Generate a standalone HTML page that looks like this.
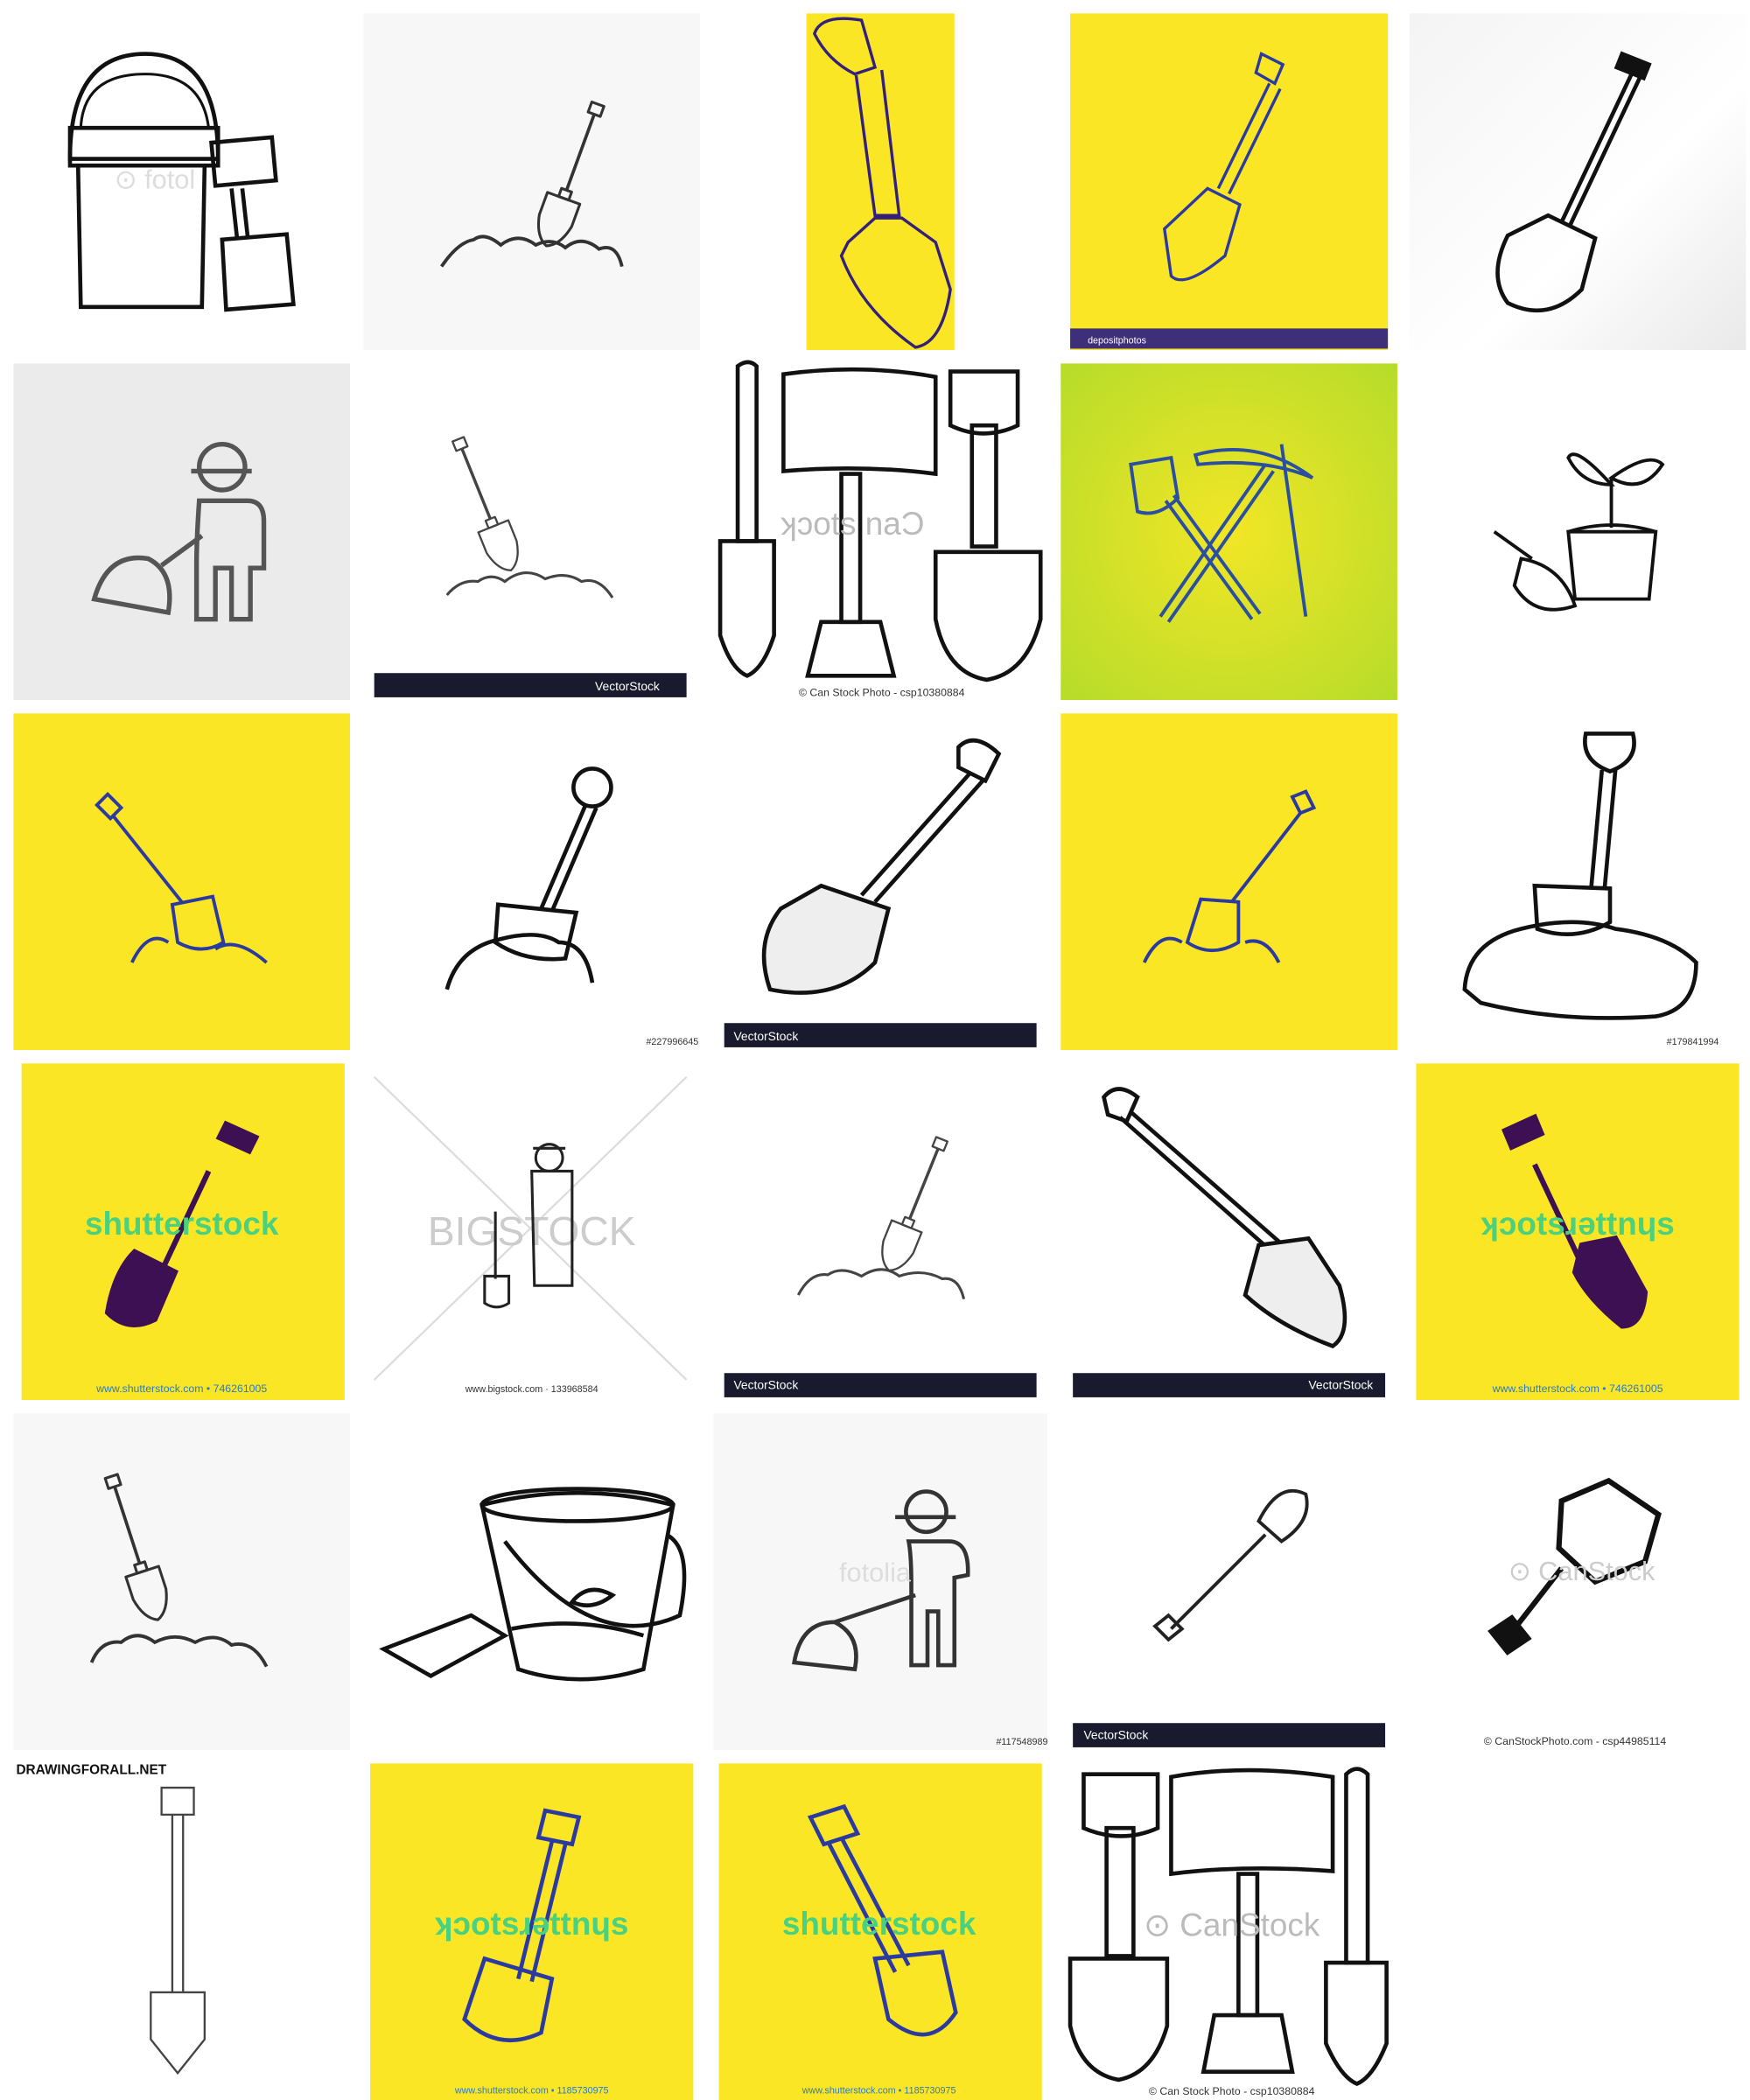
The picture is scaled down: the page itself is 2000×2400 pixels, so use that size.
<!DOCTYPE html>
<html><head><meta charset="utf-8"><style>
html,body{margin:0;padding:0;background:#fff;width:2000px;height:2400px;overflow:hidden}
svg{display:block}
text{font-family:"Liberation Sans",sans-serif}
</style></head><body>
<svg width="2000" height="2400" viewBox="0 0 1300 1560" xmlns="http://www.w3.org/2000/svg">
<defs>
<linearGradient id="g5" x1="0" y1="0" x2="1" y2="1"><stop offset="0" stop-color="#f4f4f4"/><stop offset="0.6" stop-color="#ffffff"/><stop offset="1" stop-color="#e9e9e9"/></linearGradient>
<radialGradient id="gg" cx="0.5" cy="0.5" r="0.7"><stop offset="0" stop-color="#f2e626"/><stop offset="1" stop-color="#b6dc2a"/></radialGradient>
<g id="sh" fill="none" stroke-linejoin="round">
<path d="M-6,-70 h12 v10 h-12 z"/>
<path d="M0,-60 L0,15" stroke-width="3"/>
<path d="M-5,15 h10 v8 h-10 z"/>
<path d="M-16,23 L16,23 L16,45 Q12,65 0,70 Q-12,65 -16,45 Z"/>
</g>
<g id="shf" stroke-linejoin="round">
<path d="M-7,-72 h14 v12 h-14 z" fill="none"/>
<path d="M0,-60 L0,15" stroke-width="4"/>
<path d="M-6,15 h12 v8 h-12 z"/>
<path d="M-18,23 L18,23 L18,45 Q14,68 0,74 Q-14,68 -18,45 Z"/>
</g>
</defs>

<!-- ROW 1 -->
<g stroke="#111" stroke-width="3" fill="none">
<path d="M52,118 Q52,40 108,40 Q162,40 162,118 Z"/>
<path d="M60,95 Q62,55 108,55 Q150,55 155,95 Z" stroke-width="2"/>
<path d="M52,95 h110 v28 h-110 z"/>
<path d="M58,123 L60,228 L150,228 L152,123"/>
<path d="M157,106 l45,-4 l3,32 l-45,4 z"/>
<path d="M172,140 l4,36 M180,140 l4,36"/>
<path d="M165,178 l48,-4 l5,52 l-50,4 z"/>
</g>
<text x="85" y="140" font-size="20" fill="#ddd">⊙ fotol</text>

<rect x="270" y="10" width="250" height="250" fill="#f7f7f7"/>
<g stroke="#333" stroke-width="2.5" fill="none">
<g transform="translate(425,130) rotate(20) scale(0.8)"><use href="#sh"/></g>
<path d="M328,198 Q340,180 352,178 Q360,172 372,182 Q385,172 398,182 Q410,176 420,184 Q432,174 445,185 Q458,180 462,198"/>
</g>

<rect x="599" y="10" width="110" height="250" fill="#fbe625"/>
<g stroke="#33207a" stroke-width="2.2" fill="none">
<path d="M605,25 Q610,10 640,15 L650,50 L635,55 Q615,45 605,25 Z"/>
<path d="M636,56 L650,160 L668,160 L655,52"/>
<path d="M630,180 L650,162 L670,162 L695,180 L706,215 Q700,255 680,258 Q640,230 625,190 Z"/>
</g>

<rect x="795" y="10" width="236" height="250" fill="#fbe625"/>
<rect x="795" y="244" width="236" height="15" fill="#3d2f7a"/>
<text x="808" y="255" font-size="7" fill="#fff">depositphotos</text>
<g stroke="#2b3aa0" stroke-width="2.2" fill="none">
<path d="M937,40 l16,8 l-6,14 l-14,-8 z"/>
<path d="M943,62 L905,140 M951,66 L913,144"/>
<path d="M897,140 L921,152 L910,190 Q880,215 870,205 L865,170 Z"/>
</g>

<rect x="1047" y="10" width="250" height="250" fill="url(#g5)"/>
<g stroke="#111" stroke-width="3" fill="none">
<path d="M1205,40 l20,8 l-4,10 l-20,-8 z" fill="#111"/>
<path d="M1212,55 L1160,165 M1218,58 L1166,168"/>
<path d="M1150,160 L1185,177 L1175,215 Q1150,240 1120,225 Q1105,205 1120,175 Z"/>
</g>

<!-- ROW 2 -->
<rect x="10" y="270" width="250" height="250" fill="#ebebeb"/>
<g stroke="#555" stroke-width="3.5" fill="none">
<circle cx="165" cy="347" r="17"/>
<path d="M142,350 h45"/>
<path d="M148,372 h36 q12,0 12,15 v35 h-10 v38 h-14 v-38 h-12 v38 h-14 v-40 q0,-20 2,-48 z"/>
<path d="M150,398 L120,420"/>
<path d="M70,445 Q80,410 110,415 Q130,425 125,455 Z"/>
</g>

<rect x="278" y="270" width="232" height="250" fill="#fff"/>
<rect x="278" y="500" width="232" height="18" fill="#1a1a2e"/>
<text x="490" y="513" font-size="9" fill="#fff" text-anchor="end">VectorStock</text>
<g stroke="#444" stroke-width="2" fill="none">
<g transform="translate(360,375) rotate(-22) scale(0.75)"><use href="#sh"/></g>
<path d="M332,442 Q342,430 355,432 Q365,425 375,432 Q390,420 405,430 Q420,424 432,432 Q445,428 455,444"/>
</g>

<g stroke="#111" stroke-width="3" fill="none">
<path d="M548,272 q8,-6 14,0 v130 h-14 z"/>
<path d="M535,402 h40 v70 q-8,25 -20,30 q-12,-5 -20,-30 z"/>
<path d="M582,278 Q640,270 695,280 L695,352 Q640,345 582,350 Z"/>
<path d="M625,352 h14 v110 h-14 z"/>
<path d="M610,462 h44 l10,40 h-64 z"/>
<path d="M706,276 h50 v40 q-25,12 -50,0 z"/>
<path d="M722,316 h18 v90 h-18 z"/>
<path d="M695,410 h78 v50 q-10,40 -40,45 q-30,-5 -38,-45 z"/>
</g>
<text x="580" y="397" font-size="24" fill="#bbb">ʞɔots naƆ</text>
<text x="655" y="517" font-size="8" fill="#333" text-anchor="middle">© Can Stock Photo - csp10380884</text>

<rect x="788" y="270" width="250" height="250" fill="url(#gg)"/>
<g stroke="#2a4fa0" stroke-width="2.5" fill="none">
<path d="M840,345 L870,340 L875,370 Q860,385 845,380 Z"/>
<path d="M866,372 L930,460 M872,368 L936,456"/>
<path d="M888,338 Q935,325 975,355 Q940,340 890,345 Z"/>
<path d="M940,345 L862,458 M946,350 L868,462"/>
<path d="M930,350 L965,460 M936,348 L971,458" stroke-width="0"/>
</g>
<g stroke="#2a4fa0" stroke-width="2.5"><path d="M952,330 L970,458"/></g>

<g stroke="#111" stroke-width="2.5" fill="none">
<path d="M1165,395 h65 l-5,50 h-55 z"/>
<path d="M1165,395 q32,-10 65,0"/>
<path d="M1197,392 V355"/>
<path d="M1197,360 Q1170,330 1165,340 Q1175,360 1197,360 Z"/>
<path d="M1197,355 Q1225,335 1235,345 Q1220,368 1197,355 Z"/>
<path d="M1110,395 L1138,415"/>
<path d="M1130,415 Q1160,420 1170,450 Q1140,460 1125,435 Z"/>
</g>

<!-- ROW 3 -->
<rect x="10" y="530" width="250" height="250" fill="#fbe625"/>
<g stroke="#2b3aa0" stroke-width="2.5" fill="none">
<path d="M72,598 l8,-8 l10,10 l-8,8 z"/>
<path d="M84,606 L135,670"/>
<path d="M128,672 L158,666 L166,700 Q150,710 132,700 Z"/>
<path d="M98,715 Q110,690 125,700 M160,705 Q175,695 198,715"/>
</g>

<g stroke="#111" stroke-width="3" fill="none">
<circle cx="440" cy="585" r="14"/>
<path d="M435,598 L402,675 M443,600 L410,677"/>
<path d="M370,672 L428,678 L420,712 Q390,715 368,700 Z"/>
<path d="M332,735 Q340,705 370,698 Q400,690 415,700 Q435,700 440,730"/>
</g>
<text x="480" y="776" font-size="7" fill="#333">#227996645</text>

<rect x="538" y="760" width="232" height="18" fill="#1a1a2e"/>
<text x="545" y="773" font-size="9" fill="#fff">VectorStock</text>
<g stroke="#111" stroke-width="3" fill="none">
<path d="M712,555 q12,-12 30,5 l-10,20 l-20,-10 z"/>
<path d="M720,575 L640,665 M730,580 L650,670"/>
<path d="M610,658 L660,675 L650,715 Q620,745 572,735 Q560,700 580,675 Z" fill="#eee"/>
</g>

<rect x="788" y="530" width="250" height="250" fill="#fbe625"/>
<g stroke="#2b3aa0" stroke-width="2.5" fill="none">
<path d="M960,592 l10,-4 l6,12 l-10,4 z"/>
<path d="M966,604 L915,670"/>
<path d="M892,668 L920,670 L920,700 Q900,712 882,700 Z"/>
<path d="M850,715 Q862,690 878,700 M925,700 Q940,695 950,715"/>
</g>

<g stroke="#111" stroke-width="3" fill="none">
<path d="M1178,545 h35 q5,20 -17,28 q-22,-8 -18,-28 z"/>
<path d="M1190,572 L1182,660 M1200,572 L1192,660"/>
<path d="M1140,658 L1196,660 L1196,685 Q1170,700 1142,690 Z"/>
<path d="M1088,735 Q1090,700 1130,690 Q1170,680 1200,690 Q1240,695 1260,715 Q1260,750 1230,755 Q1160,760 1100,745 Z"/>
</g>
<text x="1238" y="776" font-size="7" fill="#333">#179841994</text>

<!-- ROW 4 -->
<rect x="16" y="790" width="240" height="250" fill="#fbe625"/>
<g stroke="#3c1053" stroke-width="4" fill="#3c1053">
<path d="M168,835 L190,845 L185,855 L163,845 Z"/>
<path d="M155,870 L115,955"/>
<path d="M100,930 L130,945 L115,980 Q95,990 80,975 Q85,945 100,930 Z"/>
</g>
<text x="135" y="917" font-size="24" fill="#4ad17f" text-anchor="middle" font-weight="bold">shutterstock</text>
<text x="135" y="1034" font-size="8" fill="#2b7bbf" text-anchor="middle">www.shutterstock.com • 746261005</text>

<g stroke="#ddd" stroke-width="1.5"><path d="M278,800 L510,1025 M510,800 L278,1025"/></g>
<text x="395" y="925" font-size="30" fill="#ccc" text-anchor="middle">BIGSTOCK</text>
<g stroke="#222" stroke-width="2" fill="none">
<circle cx="408" cy="860" r="10"/><path d="M396,853 h24"/>
<path d="M395,870 h30 v85 h-28 z"/>
<path d="M368,900 v50"/>
<path d="M360,948 h18 v20 q-9,6 -18,0 z"/>
</g>
<text x="395" y="1034" font-size="7" fill="#333" text-anchor="middle">www.bigstock.com · 133968584</text>

<rect x="538" y="1020" width="232" height="18" fill="#1a1a2e"/>
<text x="545" y="1032" font-size="9" fill="#fff">VectorStock</text>
<g stroke="#444" stroke-width="2" fill="none">
<g transform="translate(680,895) rotate(22) scale(0.75)"><use href="#sh"/></g>
<path d="M593,962 Q602,945 615,947 Q625,940 640,948 Q655,938 668,948 Q685,942 700,950 Q712,948 716,965"/>
</g>

<rect x="797" y="1020" width="232" height="18" fill="#1a1a2e"/>
<text x="1020" y="1032" font-size="9" fill="#fff" text-anchor="end">VectorStock</text>
<g stroke="#111" stroke-width="3" fill="none">
<path d="M820,815 q10,-12 25,0 l-8,18 l-14,-5 z"/>
<path d="M832,830 L945,930 M840,826 L952,924"/>
<path d="M935,925 L972,920 L995,955 Q1005,990 990,1000 Q950,985 925,962 Z" fill="#eee"/>
</g>

<rect x="1052" y="790" width="240" height="250" fill="#fbe625"/>
<g stroke="#3c1053" stroke-width="4" fill="#3c1053">
<path d="M1118,840 L1140,830 L1145,842 L1123,852 Z"/>
<path d="M1140,865 L1180,950"/>
<path d="M1175,925 L1200,920 L1222,960 Q1220,985 1205,985 Q1180,965 1170,945 Z"/>
</g>
<text x="1172" y="917" font-size="24" fill="#4ad17f" text-anchor="middle" font-weight="bold">ʞɔotsɹəttnɥs</text>
<text x="1172" y="1034" font-size="8" fill="#2b7bbf" text-anchor="middle">www.shutterstock.com • 746261005</text>

<!-- ROW 5 -->
<rect x="10" y="1050" width="250" height="250" fill="#f7f7f7"/>
<g stroke="#333" stroke-width="2.5" fill="none">
<g transform="translate(100,1150) rotate(-18) scale(0.8)"><use href="#sh"/></g>
<path d="M68,1235 Q75,1218 90,1220 Q102,1210 115,1220 Q130,1212 145,1220 Q160,1212 172,1222 Q188,1218 198,1238"/>
</g>

<g stroke="#111" stroke-width="3" fill="none">
<path d="M358,1118 Q430,1100 500,1118 L478,1240 Q430,1255 385,1240 Z"/>
<ellipse cx="429" cy="1118" rx="71" ry="12"/>
<path d="M375,1145 Q440,1230 505,1200 Q515,1150 495,1140"/>
<path d="M380,1210 Q430,1200 478,1215"/>
<path d="M425,1190 q12,-15 30,-5 q-15,12 -30,5 z"/>
<path d="M350,1200 L285,1225 L320,1245 L375,1215 Z"/>
</g>

<rect x="530" y="1050" width="248" height="250" fill="#f7f7f7"/>
<g stroke="#333" stroke-width="3" fill="none">
<circle cx="688" cy="1123" r="15"/><path d="M665,1127 h45"/>
<path d="M675,1145 h30 q15,0 14,25 l-10,2 v65 h-12 v-40 h-8 v40 h-12 v-60 q0,-22 -2,-32 z"/>
<path d="M680,1185 L620,1205"/>
<path d="M590,1235 Q595,1205 620,1205 Q640,1215 635,1240 Z"/>
</g>
<text x="650" y="1175" font-size="20" fill="#ddd" text-anchor="middle">fotolia</text>
<text x="740" y="1296" font-size="7" fill="#333">#117548989</text>

<rect x="797" y="1280" width="232" height="18" fill="#1a1a2e"/>
<text x="805" y="1292" font-size="9" fill="#fff">VectorStock</text>
<g stroke="#222" stroke-width="2.5" fill="none">
<path d="M935,1130 Q950,1100 970,1110 Q975,1130 952,1145 Z"/>
<path d="M940,1140 L870,1210"/>
<path d="M858,1208 l10,-8 l10,10 l-10,8 z"/>
</g>

<g stroke="#111" stroke-width="4" fill="none">
<path d="M1160,1115 L1195,1100 L1232,1125 L1222,1160 L1185,1175 L1158,1150 Z"/>
<path d="M1160,1165 L1125,1210"/>
<path d="M1108,1212 l15,-10 l12,15 l-15,10 z" fill="#111"/>
</g>
<text x="1175" y="1174" font-size="20" fill="#ccc" text-anchor="middle">⊙ CanStock</text>
<text x="1170" y="1296" font-size="8" fill="#333" text-anchor="middle">© CanStockPhoto.com - csp44985114</text>

<!-- ROW 6 -->
<text x="12" y="1318" font-size="10" fill="#111" font-weight="bold">DRAWINGFORALL.NET</text>
<g stroke="#444" stroke-width="1.5" fill="none">
<path d="M120,1328 h24 v20 h-24 z"/>
<path d="M128,1348 V1480 M136,1348 V1480"/>
<path d="M112,1480 h40 v35 l-20,25 l-20,-25 z"/>
</g>

<rect x="275" y="1310" width="240" height="250" fill="#fbe625"/>
<g stroke="#2b3aa0" stroke-width="3" fill="none">
<path d="M405,1345 l25,5 l-5,20 l-25,-5 z"/>
<path d="M410,1368 L385,1470 M420,1370 L395,1472"/>
<path d="M360,1455 L410,1470 L402,1510 Q370,1525 345,1500 Z"/>
</g>
<text x="395" y="1437" font-size="24" fill="#4ad17f" text-anchor="middle" font-weight="bold">ʞɔotsɹəttnɥs</text>
<text x="395" y="1555" font-size="7" fill="#2b7bbf" text-anchor="middle">www.shutterstock.com • 1185730975</text>

<rect x="534" y="1310" width="240" height="250" fill="#fbe625"/>
<g stroke="#2b3aa0" stroke-width="3" fill="none">
<path d="M602,1350 l25,-8 l10,20 l-25,8 z"/>
<path d="M615,1368 L665,1465 M625,1365 L675,1460"/>
<path d="M650,1455 L700,1450 L710,1495 Q690,1525 660,1500 Z"/>
</g>
<text x="653" y="1437" font-size="24" fill="#4ad17f" text-anchor="middle" font-weight="bold">shutterstock</text>
<text x="653" y="1555" font-size="7" fill="#2b7bbf" text-anchor="middle">www.shutterstock.com • 1185730975</text>

<g stroke="#111" stroke-width="3" fill="none">
<path d="M805,1318 h55 v40 q-27,12 -55,0 z"/>
<path d="M822,1358 h20 v95 h-20 z"/>
<path d="M795,1455 h72 v50 q-10,35 -36,40 q-28,-5 -36,-40 z"/>
<path d="M870,1320 Q925,1310 990,1320 L990,1390 Q925,1385 870,1392 Z"/>
<path d="M920,1392 h14 v105 h-14 z"/>
<path d="M902,1497 h50 l8,42 h-66 z"/>
<path d="M1000,1318 q8,-8 16,0 v140 h-16 z"/>
<path d="M985,1458 h45 v60 q-10,25 -22,30 q-12,-5 -23,-30 z"/>
</g>
<text x="915" y="1438" font-size="24" fill="#bbb" text-anchor="middle">⊙ CanStock</text>
<text x="915" y="1556" font-size="8" fill="#333" text-anchor="middle">© Can Stock Photo - csp10380884</text>
</svg>
</body></html>
